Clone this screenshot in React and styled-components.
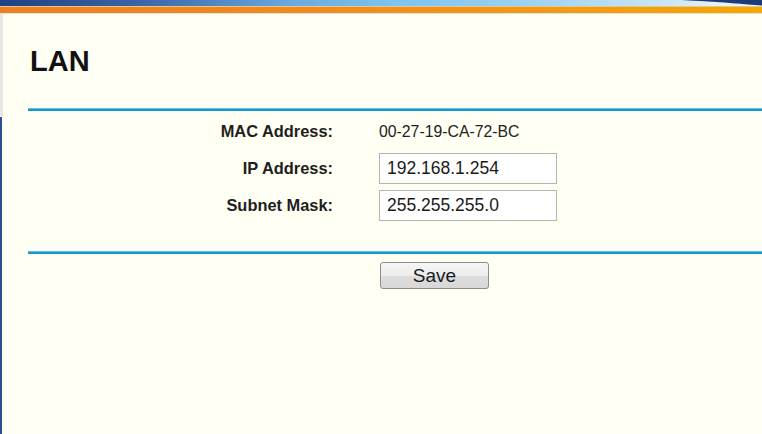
import styled, { createGlobalStyle } from 'styled-components'

const GlobalStyle = createGlobalStyle`
  html, body {
    margin: 0;
    padding: 0;
    background: #fffff4;
  }
  body {
    font-family: "Liberation Sans", Arial, sans-serif;
    color: #1a1a1a;
  }
`;

export default function App() {
  return (
    <>
      <GlobalStyle />
      <Page>
        <Banner>
          <BlueStrip>
            <Swoosh viewBox="0 0 80 7" preserveAspectRatio="none">
              <path d="M0 0 L80 0 L80 6.5 C62 5 40 2.5 18 1.2 C10 0.7 4 0.3 0 0 Z" fill="#1c3a78" />
            </Swoosh>
          </BlueStrip>
          <OrangeStrip />
        </Banner>
        <Body>
          <LeftRail>
            <RailTop />
            <RailBottom />
          </LeftRail>
          <Main>
            <Title>LAN</Title>
            <Divider />
            <Form>
              <Label>MAC Address:</Label>
              <Value>00-27-19-CA-72-BC</Value>
              <Label>IP Address:</Label>
              <Value>
                <Field type="text" defaultValue="192.168.1.254" />
              </Value>
              <Label>Subnet Mask:</Label>
              <Value>
                <Field type="text" defaultValue="255.255.255.0" />
              </Value>
            </Form>
            <Divider $gap={30} />
            <Actions>
              <SaveButton type="button">Save</SaveButton>
            </Actions>
          </Main>
        </Body>
      </Page>
    </>
  )
}

const Page = styled.div`
  display: flex;
  flex-direction: column;
  min-height: 100vh;
`;

const Banner = styled.div`
  display: flex;
  flex-direction: column;
  border-bottom: 1px solid #e2e2dc;
`;

const BlueStrip = styled.div`
  position: relative;
  height: 6px;
  background: linear-gradient(90deg, #213f86 0%, #3b63a6 18%, #6aa9dc 38%, #7cc5f0 52%, #9fd2f1 70%, #cde6f3 88%, #e6f1f6 94%);
  border-bottom: 1px solid #e8c890;
  overflow: hidden;
`;

const Swoosh = styled.svg`
  position: absolute;
  right: 0;
  top: 0;
  width: 80px;
  height: 6px;
`;

const OrangeStrip = styled.div`
  height: 6px;
  background: linear-gradient(90deg, #ee7f1f 0%, #f28a1e 40%, #f39a14 75%, #f4a800 100%);
`;

const Body = styled.div`
  flex: 1;
  display: flex;
`;

const LeftRail = styled.div`
  width: 3px;
  display: flex;
  flex-direction: column;
`;

const RailTop = styled.div`
  height: 102px;
  background: #e6e6e2;
`;

const RailBottom = styled.div`
  flex: 1;
  margin-top: 1px;
  width: 2px;
  background: #2c4e92;
`;

const Main = styled.div`
  flex: 1;
  display: flex;
  flex-direction: column;
  padding-left: 25px;
`;

const Title = styled.h1`
  margin: 31px 0 0 2px;
  font-size: 29px;
  line-height: 32px;
  font-weight: bold;
  color: #111;
`;

const Divider = styled.div`
  margin-top: ${p => p.$gap ?? 31}px;
  height: 2px;
  border-top: 1px solid #62bfe4;
  background: #1797d3;
`;

const Form = styled.div`
  display: grid;
  grid-template-columns: 305px 178px;
  column-gap: 46px;
  row-gap: 6px;
  grid-auto-rows: 31px;
  padding-top: 5px;
`;

const Label = styled.div`
  display: flex;
  align-items: center;
  justify-content: flex-end;
  font-size: 16.4px;
  font-weight: bold;
  color: #1e1e1e;
`;

const Value = styled.div`
  display: flex;
  align-items: center;
  font-size: 15.8px;
  color: #222;
`;

const Field = styled.input`
  box-sizing: border-box;
  width: 178px;
  height: 31px;
  padding: 0 0 0 7px;
  border: 1px solid #b4b4b0;
  background: #fff;
  font-family: "Liberation Sans", Arial, sans-serif;
  font-size: 17.5px;
  color: #1a1a1a;
  outline: none;
`;

const Actions = styled.div`
  padding: 8px 0 0 352px;
`;

const SaveButton = styled.button`
  box-sizing: border-box;
  width: 109px;
  height: 27px;
  padding: 0;
  border: 1px solid #8c8c8c;
  border-radius: 3px;
  background: linear-gradient(180deg, #f6f6f6 0%, #ececec 50%, #dedede 51%, #d8d8d8 100%);
  font-family: "Liberation Sans", Arial, sans-serif;
  font-size: 19px;
  color: #1a1a1a;
  cursor: pointer;
`;
